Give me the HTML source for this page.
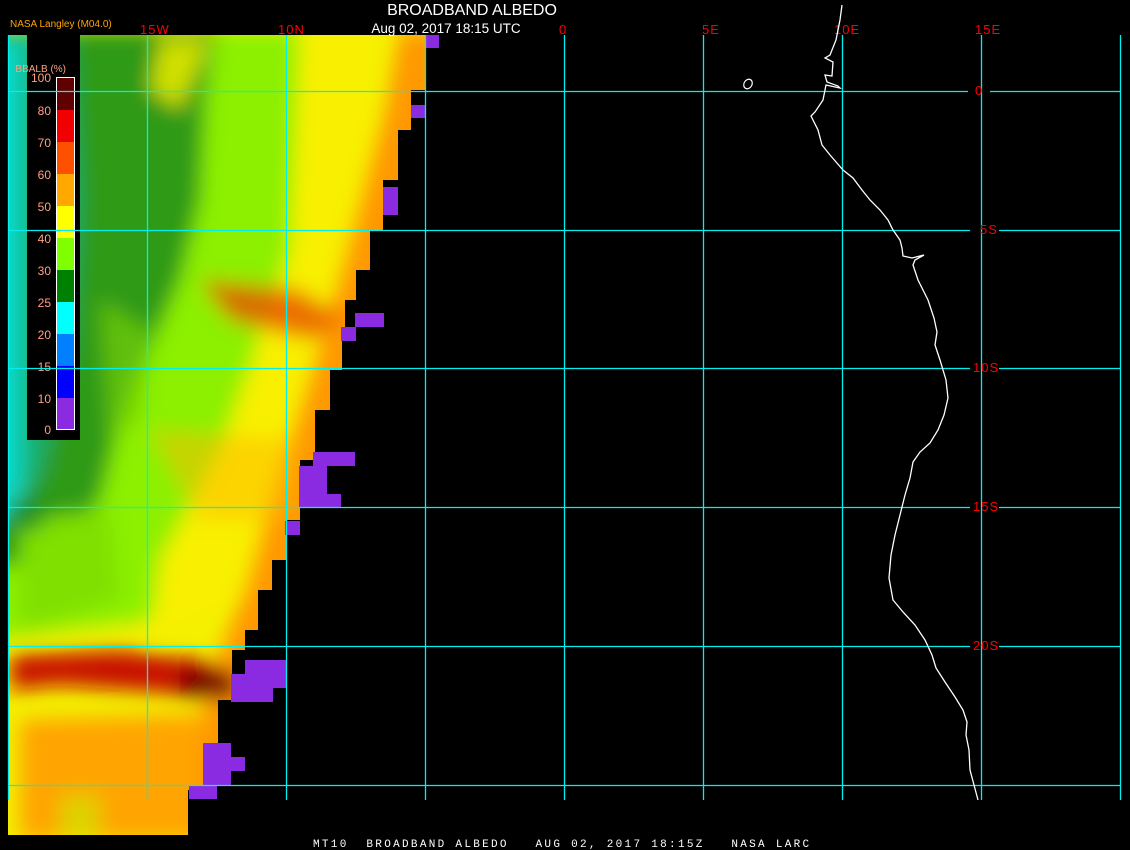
<!DOCTYPE html>
<html><head><meta charset="utf-8"><style>
html,body{margin:0;padding:0;background:#000;width:1130px;height:850px;overflow:hidden}
svg{display:block}
text{font-family:"Liberation Sans",sans-serif}
.m{font-family:"Liberation Mono",monospace}
</style></head><body>
<svg width="1130" height="850" viewBox="0 0 1130 850" xmlns="http://www.w3.org/2000/svg">
<defs>
<clipPath id="dc"><path d="M8,35 H425 V90 H411 V130 H398 V180 H383 V230 H370 V270 H356 V300 H345 V330 H342 V370 H330 V410 H315 V460 H300 V520 H287 V560 H272 V590 H258 V630 H245 V650 H232 V700 H218 V750 H205 V790 H188 V835 H8 Z"/></clipPath>
<filter id="b" x="-20%" y="-20%" width="140%" height="140%"><feGaussianBlur stdDeviation="10"/></filter>
</defs>
<g clip-path="url(#dc)">
<rect x="0" y="30" width="440" height="810" fill="#f4f000"/>
<g filter="url(#b)">
<!-- light green base upper -->
<path d="M-20,30 H300 L300,200 L290,260 L260,330 L240,420 L220,500 L200,560 L150,620 L-20,640 Z" fill="#8cf000"/>
<!-- dark green -->
<path d="M-20,30 H215 L205,100 L200,200 L180,280 L150,350 L120,420 L100,500 L40,560 L-20,570 Z" fill="#2e9a18"/>
<path d="M-20,30 H70 L80,200 L70,350 L40,480 L-20,520 Z" fill="#18b070"/>
<path d="M-20,40 H22 V520 H-20 Z" fill="#10d8c8"/>
<path d="M160,40 L210,40 L180,110 L150,90 Z" fill="#d0e000"/>
<path d="M100,300 L150,330 L140,420 L110,440 Z" fill="#78d000" opacity="0.7"/>
<path d="M20,520 L110,510 L120,600 L20,630 Z" fill="#80e000"/>
<path d="M8,500 L50,500 L40,530 L8,530 Z" fill="#209020"/>
<!-- yellow interior -->
<path d="M300,30 H380 L370,150 L350,230 L320,320 L290,420 L270,510 L250,590 L150,640 L160,560 L220,450 L260,340 L290,250 Z" fill="#f8f000"/>
<!-- orange edge -->
<path d="M400,30 H440 V840 H180 L190,790 L205,700 L225,640 L245,590 L262,530 L280,470 L300,410 L320,345 L340,275 L360,200 L385,110 Z" fill="#ff9800"/>
<path d="M200,280 L300,290 L345,320 L310,340 L230,320 Z" fill="#e85000" opacity="0.8"/>
<path d="M150,430 L300,440 L290,520 L200,520 Z" fill="#ffb800" opacity="0.5"/>
<!-- red band -->
<path d="M10,655 L120,650 L200,660 L240,675 L235,700 L150,692 L60,685 L10,690 Z" fill="#c81000"/>
<path d="M180,668 L235,672 L235,700 L180,696 Z" fill="#700000"/>
<!-- bottom orange -->
<path d="M20,720 L200,715 L200,840 L20,840 Z" fill="#ffa400"/>
<path d="M60,795 L100,795 L100,840 L60,840 Z" fill="#c8f000" opacity="0.6"/>
</g>
</g>
<g fill="#8a2be2">
<rect x="425" y="35" width="14" height="13"/>
<rect x="411" y="105" width="14" height="13"/>
<rect x="383" y="187" width="15" height="28"/>
<rect x="355" y="313" width="29" height="14"/>
<rect x="341" y="327" width="15" height="14"/>
<rect x="313" y="452" width="42" height="14"/>
<rect x="299" y="466" width="28" height="42"/>
<rect x="327" y="494" width="14" height="14"/>
<rect x="285" y="521" width="15" height="14"/>
<rect x="245" y="660" width="41" height="28"/>
<rect x="231" y="674" width="42" height="28"/>
<rect x="203" y="743" width="28" height="42"/>
<rect x="231" y="757" width="14" height="14"/>
<rect x="189" y="785" width="28" height="14"/>
</g>
<rect x="27" y="35" width="53" height="405" fill="#000"/>
<g>
<rect x="56" y="77" width="19" height="33" fill="#600000"/>
<rect x="56" y="110" width="19" height="32" fill="#f00000"/>
<rect x="56" y="142" width="19" height="32" fill="#ff5000"/>
<rect x="56" y="174" width="19" height="32" fill="#ffa800"/>
<rect x="56" y="206" width="19" height="32" fill="#ffff00"/>
<rect x="56" y="238" width="19" height="32" fill="#80ff00"/>
<rect x="56" y="270" width="19" height="32" fill="#008000"/>
<rect x="56" y="302" width="19" height="32" fill="#00ffff"/>
<rect x="56" y="334" width="19" height="32" fill="#0080ff"/>
<rect x="56" y="366" width="19" height="32" fill="#0000ff"/>
<rect x="56" y="398" width="19" height="32" fill="#8a2be2"/>
<rect x="56.5" y="77.5" width="18" height="352" fill="none" stroke="#fff" stroke-width="1"/>
</g>
<g fill="#ffa080" font-size="12" text-anchor="end">
<text x="51" y="82">100</text><text x="51" y="115">80</text><text x="51" y="147">70</text>
<text x="51" y="179">60</text><text x="51" y="211">50</text><text x="51" y="243">40</text>
<text x="51" y="275">30</text><text x="51" y="307">25</text><text x="51" y="339">20</text>
<text x="51" y="371">15</text><text x="51" y="403">10</text><text x="51" y="434">0</text>
<text x="66" y="72" font-size="10">BBALB (%)</text>
</g>
<g stroke="#00f0f0" stroke-width="1.3">
<line x1="8.5" y1="35" x2="8.5" y2="800"/>
<line x1="147.5" y1="35" x2="147.5" y2="800"/>
<line x1="286.5" y1="35" x2="286.5" y2="800"/>
<line x1="425.5" y1="35" x2="425.5" y2="800"/>
<line x1="564.5" y1="35" x2="564.5" y2="800"/>
<line x1="703.5" y1="35" x2="703.5" y2="800"/>
<line x1="842.5" y1="35" x2="842.5" y2="800"/>
<line x1="981.5" y1="35" x2="981.5" y2="800"/>
<line x1="1120.5" y1="35" x2="1120.5" y2="800"/>
<line x1="8" y1="91.5" x2="968" y2="91.5"/><line x1="990" y1="91.5" x2="1120" y2="91.5"/>
<line x1="8" y1="230.5" x2="970" y2="230.5"/><line x1="999" y1="230.5" x2="1120" y2="230.5"/>
<line x1="8" y1="368.5" x2="970" y2="368.5"/><line x1="999" y1="368.5" x2="1120" y2="368.5"/>
<line x1="8" y1="507.5" x2="970" y2="507.5"/><line x1="999" y1="507.5" x2="1120" y2="507.5"/>
<line x1="8" y1="646.5" x2="970" y2="646.5"/><line x1="999" y1="646.5" x2="1120" y2="646.5"/>
<line x1="8" y1="785.5" x2="1120" y2="785.5"/>
</g>
<g fill="#ff0000" font-size="13" class="m" letter-spacing="1">
<text x="140" y="34">15W</text><text x="278" y="34">10N</text>
<text x="559" y="34">0</text><text x="702" y="34">5E</text>
<text x="834" y="34">10E</text><text x="975" y="34">15E</text>
<text x="975" y="95">0</text><text x="980" y="234">5S</text>
<text x="973" y="372">10S</text><text x="973" y="511">15S</text>
<text x="973" y="650">20S</text>
</g>
<polyline fill="none" stroke="#fff" stroke-width="1.3" points="842,5 840,20 836,40 830,55 825,58 833,62 832,76 825,75 827,82 838,86 840,88 826,85 823,100 815,112 811,116 818,130 822,145 830,155 843,170 853,178 862,190 870,200 880,210 888,220 893,230 900,240 902,248 903,256 912,258 924,255 915,260 913,265 918,280 928,300 934,318 937,332 935,345 940,360 946,380 948,398 944,415 938,430 930,443 920,452 913,462 910,478 905,495 900,515 895,535 891,555 889,578 893,600 903,612 915,625 925,640 932,655 936,668 945,682 955,697 963,710 967,722 966,735 969,750 970,770 974,785 978,800"/>
<ellipse cx="748" cy="84" rx="4" ry="5" transform="rotate(30 748 84)" fill="none" stroke="#fff" stroke-width="1.2"/>
<text x="10" y="27" fill="#ffa500" font-size="10">NASA Langley (M04.0)</text>
<text x="472" y="15" fill="#fff" font-size="16" text-anchor="middle">BROADBAND ALBEDO</text>
<text x="446" y="33" fill="#fff" font-size="13.5" text-anchor="middle">Aug 02, 2017 18:15 UTC</text>
<text x="313" y="847" fill="#fff" font-size="11" class="m" letter-spacing="2.3" xml:space="preserve">MT10  BROADBAND ALBEDO   AUG 02, 2017 18:15Z   NASA LARC</text>
</svg>
</body></html>
